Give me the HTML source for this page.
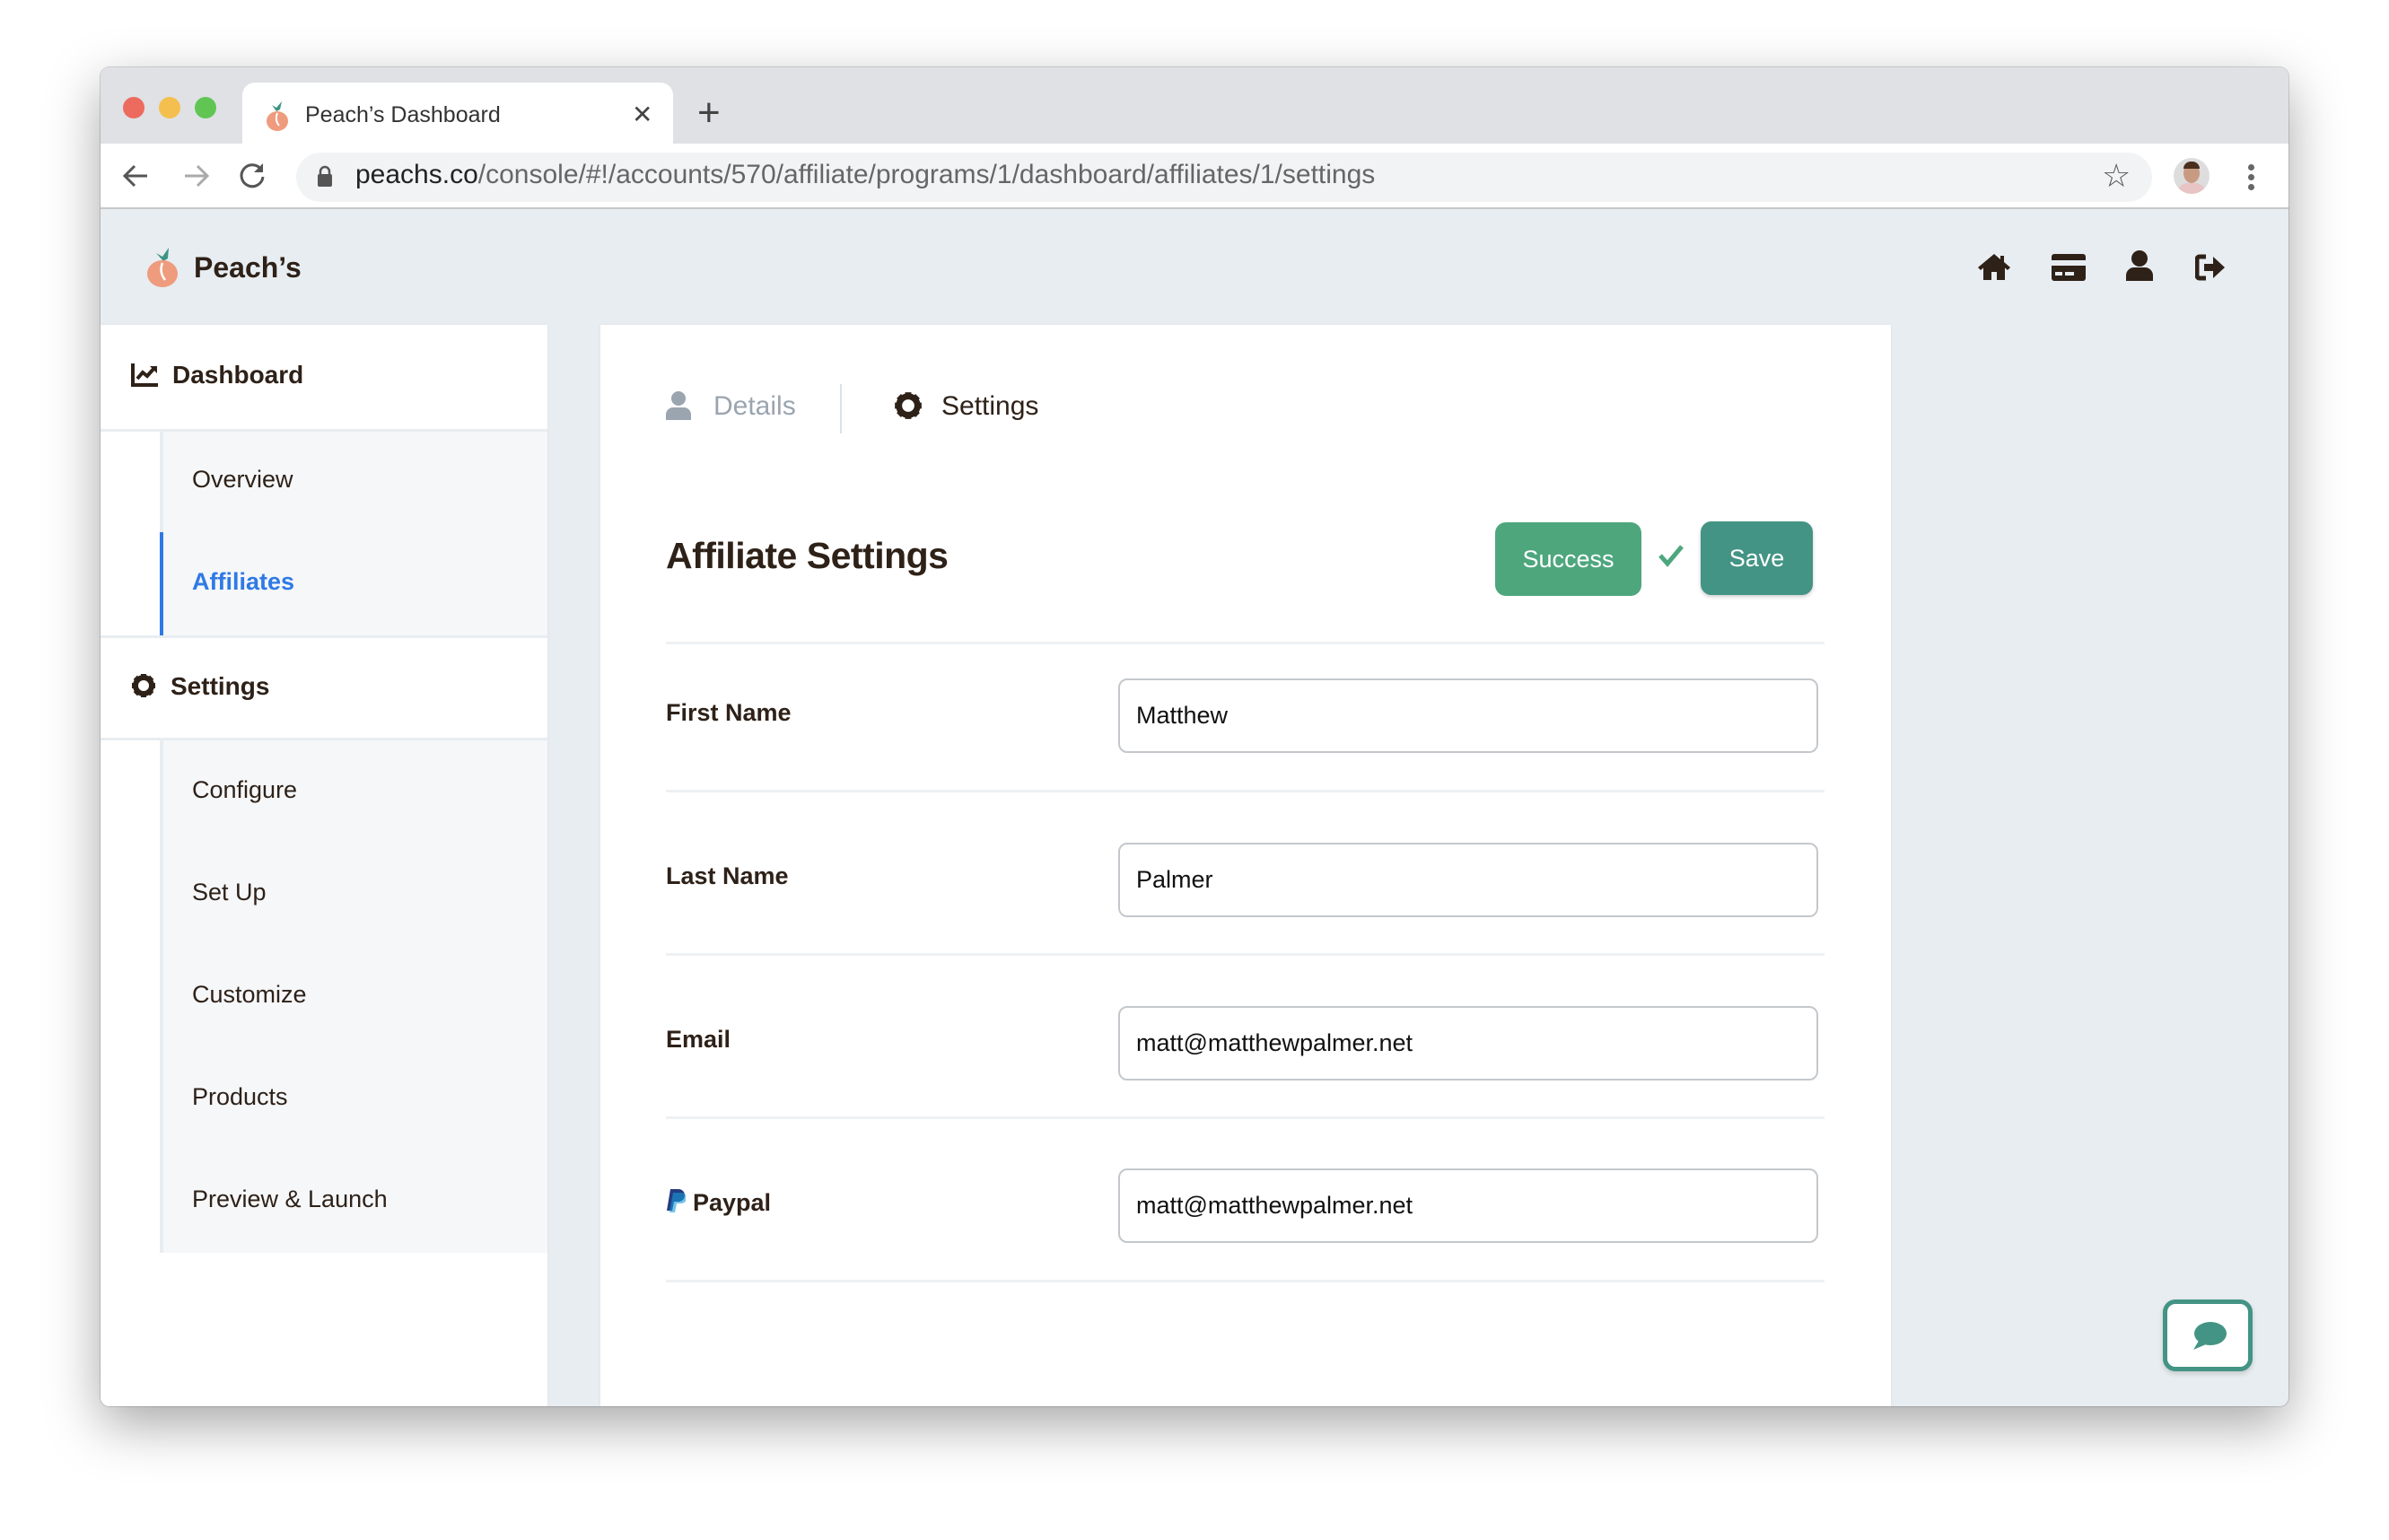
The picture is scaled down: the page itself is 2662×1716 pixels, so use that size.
<!DOCTYPE html>
<html><head><meta charset="utf-8"><style>
*{box-sizing:border-box;margin:0;padding:0}
body{width:2662px;height:1716px;background:#fff;position:relative;overflow:hidden;font-family:"Liberation Sans","DejaVu Sans",sans-serif;color:#2e2118}
.a{position:absolute}
.win{left:112px;top:75px;width:2438px;height:1492px;border-radius:10px;overflow:hidden;background:#e8edf1;box-shadow:0 20px 60px rgba(0,0,0,.35),0 0 0 1px rgba(0,0,0,.15)}
.t{white-space:nowrap}
.sub{font-size:27px;color:#2e2118}
.lbl{font-size:27px;font-weight:bold;color:#2e2118;left:742px}
.inp{left:1246px;width:780px;height:83px;border:2px solid #c4c8cc;border-radius:10px;background:#fff;font-size:27px;color:#111;padding-left:18px;line-height:79px}
.hr{left:742px;width:1291px;height:3px;background:#edf1f4}
</style></head><body>
<div class="a win">
  <div class="a" style="left:0;top:0;width:2438px;height:85px;background:#dfe1e5"></div>
  <div class="a" style="left:25px;top:33px;width:24px;height:24px;border-radius:50%;background:#ed6a5e"></div>
  <div class="a" style="left:65px;top:33px;width:24px;height:24px;border-radius:50%;background:#f5bf4f"></div>
  <div class="a" style="left:105px;top:33px;width:24px;height:24px;border-radius:50%;background:#61c554"></div>
  <div class="a" style="left:158px;top:17px;width:480px;height:70px;background:#fff;border-radius:14px 14px 0 0"></div>
  <svg class="a" style="left:182px;top:37px" width="30" height="34" viewBox="0 0 30 34"><path d="M14 12 L9 5 L14 8 L20 1 L18 10Z" fill="#3d9484"/><ellipse cx="15" cy="23" rx="12" ry="11" fill="#ef9b7e"/><path d="M15 14 Q12 22 17 28" stroke="#fff" stroke-width="2" fill="none"/></svg>
  <div class="a t" style="left:228px;top:39px;font-size:25px;color:#333">Peach’s Dashboard</div>
  <div class="a t" style="left:592px;top:36px;font-size:28px;color:#444">✕</div>
  <div class="a t" style="left:665px;top:26px;font-size:44px;color:#444;font-weight:300">+</div>
  <div class="a" style="left:0;top:85px;width:2438px;height:73px;background:#fff;border-bottom:2px solid #c8c8c8"></div>
  <svg class="a" style="left:22px;top:105px" width="36" height="32" viewBox="0 0 36 32"><path d="M30 16H6M16 5L5 16l11 11" stroke="#555" stroke-width="3" fill="none"/></svg>
  <svg class="a" style="left:88px;top:105px" width="36" height="32" viewBox="0 0 36 32"><path d="M6 16h24M20 5l11 11-11 11" stroke="#aaa" stroke-width="3" fill="none"/></svg>
  <svg class="a" style="left:152px;top:103px" width="34" height="34" viewBox="0 0 34 34"><path d="M27 11A12 12 0 1 0 29 19" stroke="#555" stroke-width="3" fill="none"/><path d="M29 4v10H19" fill="#555"/></svg>
  <div class="a" style="left:218px;top:95px;width:2068px;height:55px;border-radius:28px;background:#f1f3f4"></div>
  <svg class="a" style="left:242px;top:109px" width="16" height="24" viewBox="0 0 16 24"><path d="M3 10V7a5 5 0 0 1 10 0v3" stroke="#555" stroke-width="2.5" fill="none"/><rect x="0" y="10" width="16" height="14" rx="2" fill="#555"/></svg>
  <div class="a t" style="left:284px;top:103px;font-size:30px;color:#222">peachs.co<span style="color:#666">/console/#!/accounts/570/affiliate/programs/1/dashboard/affiliates/1/settings</span></div>
  <div class="a t" style="left:2230px;top:100px;font-size:36px;color:#555">☆</div>
  <div class="a" style="left:2310px;top:101px;width:40px;height:40px;border-radius:50%;background:#ddd;overflow:hidden"><div class="a" style="left:11px;top:6px;width:18px;height:22px;border-radius:50%;background:#c99a82"></div><div class="a" style="left:11px;top:4px;width:18px;height:8px;border-radius:9px 9px 0 0;background:#4a2e1e"></div><div class="a" style="left:4px;top:28px;width:32px;height:16px;border-radius:12px 12px 0 0;background:#e8c4c4"></div></div>
  <div class="a" style="left:2393px;top:108px;width:7px;height:7px;border-radius:50%;background:#666;box-shadow:0 11px 0 #666,0 22px 0 #666"></div>

  <svg class="a" style="left:50px;top:200px" width="40" height="46" viewBox="0 0 40 46"><path d="M20 16 L12 7 L19 11 L26 1 L25 13Z" fill="#3d9484"/><ellipse cx="19" cy="30" rx="17" ry="15" fill="#ef9b7e"/><path d="M19 18 Q15 28 22 37" stroke="#fff" stroke-width="2.5" fill="none"/></svg>
  <div class="a t" style="left:104px;top:205px;font-size:32px;font-weight:bold">Peach’s</div>
  <svg class="a" style="left:2091px;top:206px" width="38" height="32" viewBox="0 0 38 32"><path d="M19 2L1 17l3 3 3-2.5V31h9v-9h6v9h9V17.5l3 2.5 3-3-7-6V4h-4v4z" fill="#2e2118"/></svg>
  <svg class="a" style="left:2174px;top:208px" width="38" height="30" viewBox="0 0 38 30"><rect x="0" y="0" width="38" height="30" rx="3" fill="#2e2118"/><rect x="0" y="7" width="38" height="6" fill="#e8edf1"/><rect x="4" y="20" width="8" height="4" fill="#e8edf1"/><rect x="15" y="20" width="10" height="4" fill="#e8edf1"/></svg>
  <svg class="a" style="left:2257px;top:204px" width="30" height="34" viewBox="0 0 30 34"><circle cx="15" cy="9" r="9" fill="#2e2118"/><path d="M0 34v-6a9 9 0 0 1 9-9h12a9 9 0 0 1 9 9v6z" fill="#2e2118"/></svg>
  <svg class="a" style="left:2334px;top:208px" width="34" height="30" viewBox="0 0 34 30"><path d="M12 3H5a3 3 0 0 0-3 3v18a3 3 0 0 0 3 3h7" stroke="#2e2118" stroke-width="5" fill="none"/><path d="M10 11h10V3l13 12-13 12v-8H10z" fill="#2e2118"/></svg>

  <div class="a" style="left:0;top:287px;width:498px;height:1210px;background:#fff;box-shadow:0 0 4px rgba(0,0,0,.05)"></div>
  <svg class="a" style="left:34px;top:330px" width="30" height="26" viewBox="0 0 30 26"><path d="M2 0v24h28" stroke="#2e2118" stroke-width="4" fill="none"/><path d="M7 17l6-7 5 4 8-9" stroke="#2e2118" stroke-width="4" fill="none"/><path d="M21 3h8v8z" fill="#2e2118"/></svg>
  <div class="a t" style="left:80px;top:327px;font-size:28px;font-weight:bold">Dashboard</div>
  <div class="a" style="left:0;top:403px;width:498px;height:3px;background:#e8edf1"></div>
  <div class="a" style="left:66px;top:406px;width:432px;height:227px;background:#f5f7f9;border-left:4px solid #e8edf1"></div>
  <div class="a t sub" style="left:102px;top:444px">Overview</div>
  <div class="a" style="left:66px;top:518px;width:4px;height:115px;background:#2f7ae5"></div>
  <div class="a t sub" style="left:102px;top:558px;color:#2f7ae5;font-weight:bold">Affiliates</div>
  <div class="a" style="left:0;top:633px;width:498px;height:3px;background:#e8edf1"></div>
  <svg class="a" style="left:34px;top:675px" width="28" height="28" viewBox="0 0 28 28"><circle cx="14" cy="14" r="9" fill="none" stroke="#2e2118" stroke-width="6"/><g stroke="#2e2118" stroke-width="6"><path d="M14 1v6M14 21v6M1 14h6M21 14h6M4.8 4.8l4 4M19.2 19.2l4 4M4.8 23.2l4-4M19.2 8.8l4-4"/></g></svg>
  <div class="a t" style="left:78px;top:674px;font-size:28px;font-weight:bold">Settings</div>
  <div class="a" style="left:0;top:747px;width:498px;height:3px;background:#e8edf1"></div>
  <div class="a" style="left:66px;top:750px;width:432px;height:571px;background:#f5f7f9;border-left:4px solid #e8edf1"></div>
  <div class="a t sub" style="left:102px;top:790px">Configure</div>
  <div class="a t sub" style="left:102px;top:904px">Set Up</div>
  <div class="a t sub" style="left:102px;top:1018px">Customize</div>
  <div class="a t sub" style="left:102px;top:1132px">Products</div>
  <div class="a t sub" style="left:102px;top:1246px">Preview &amp; Launch</div>

  <div class="a" style="left:557px;top:287px;width:1438px;height:1210px;background:#fff;box-shadow:0 0 4px rgba(0,0,0,.05)"></div>
  <svg class="a" style="left:630px;top:361px" width="28" height="32" viewBox="0 0 28 32"><circle cx="14" cy="8" r="8" fill="#9aa5af"/><path d="M0 32v-6a8 8 0 0 1 8-8h12a8 8 0 0 1 8 8v6z" fill="#9aa5af"/></svg>
  <div class="a t" style="left:683px;top:361px;font-size:30px;color:#9aa5af">Details</div>
  <div class="a" style="left:824px;top:353px;width:2px;height:55px;background:#dbe3ea"></div>
  <svg class="a" style="left:884px;top:361px" width="32" height="32" viewBox="0 0 28 28"><circle cx="14" cy="14" r="9" fill="none" stroke="#2e2118" stroke-width="6"/><g stroke="#2e2118" stroke-width="6"><path d="M14 1v6M14 21v6M1 14h6M21 14h6M4.8 4.8l4 4M19.2 19.2l4 4M4.8 23.2l4-4M19.2 8.8l4-4"/></g></svg>
  <div class="a t" style="left:937px;top:361px;font-size:30px">Settings</div>

  <div class="a t" style="left:630px;top:521px;font-size:41px;font-weight:bold;letter-spacing:-0.5px">Affiliate Settings</div>
  <div class="a t" style="left:1554px;top:507px;width:163px;height:82px;border-radius:12px;background:#4ea67d;color:#fff;font-size:27px;text-align:center;line-height:82px">Success</div>
  <svg class="a" style="left:1735px;top:531px" width="30" height="26" viewBox="0 0 30 26"><path d="M3 13l8 9L27 3" stroke="#4ea67d" stroke-width="5" fill="none"/></svg>
  <div class="a t" style="left:1783px;top:506px;width:125px;height:82px;border-radius:12px;background:#439484;color:#fff;font-size:27px;text-align:center;line-height:82px;box-shadow:0 2px 4px rgba(0,0,0,.2)">Save</div>

  <div class="a hr" style="left:630px;top:640px"></div>
  <div class="a lbl t" style="left:630px;top:704px">First Name</div>
  <div class="a inp t" style="left:1134px;top:681px">Matthew</div>
  <div class="a hr" style="left:630px;top:805px"></div>
  <div class="a lbl t" style="left:630px;top:886px">Last Name</div>
  <div class="a inp t" style="left:1134px;top:864px">Palmer</div>
  <div class="a hr" style="left:630px;top:987px"></div>
  <div class="a lbl t" style="left:630px;top:1068px">Email</div>
  <div class="a inp t" style="left:1134px;top:1046px">matt@matthewpalmer.net</div>
  <div class="a hr" style="left:630px;top:1169px"></div>
  <svg class="a" style="left:630px;top:1250px" width="22" height="28" viewBox="0 0 22 28"><path d="M5 0h9a7 7 0 0 1 0 14H9l-2 10H1z" fill="#253b80"/><path d="M8 4h9a6 6 0 0 1 0 12h-5l-2 10H4z" fill="#179bd7" opacity=".6"/></svg>
  <div class="a lbl t" style="left:660px;top:1250px">Paypal</div>
  <div class="a inp t" style="left:1134px;top:1227px">matt@matthewpalmer.net</div>
  <div class="a hr" style="left:630px;top:1351px"></div>

  <div class="a" style="left:2298px;top:1373px;width:100px;height:80px;border:5px solid #439484;border-radius:14px;background:#fff;box-shadow:0 3px 6px rgba(0,0,0,.15)"></div>
  <svg class="a" style="left:2330px;top:1397px" width="40" height="34" viewBox="0 0 40 34"><ellipse cx="21" cy="14" rx="18" ry="13" fill="#439484"/><path d="M8 22L2 32l14-6z" fill="#439484"/></svg>
</div>
</body></html>
